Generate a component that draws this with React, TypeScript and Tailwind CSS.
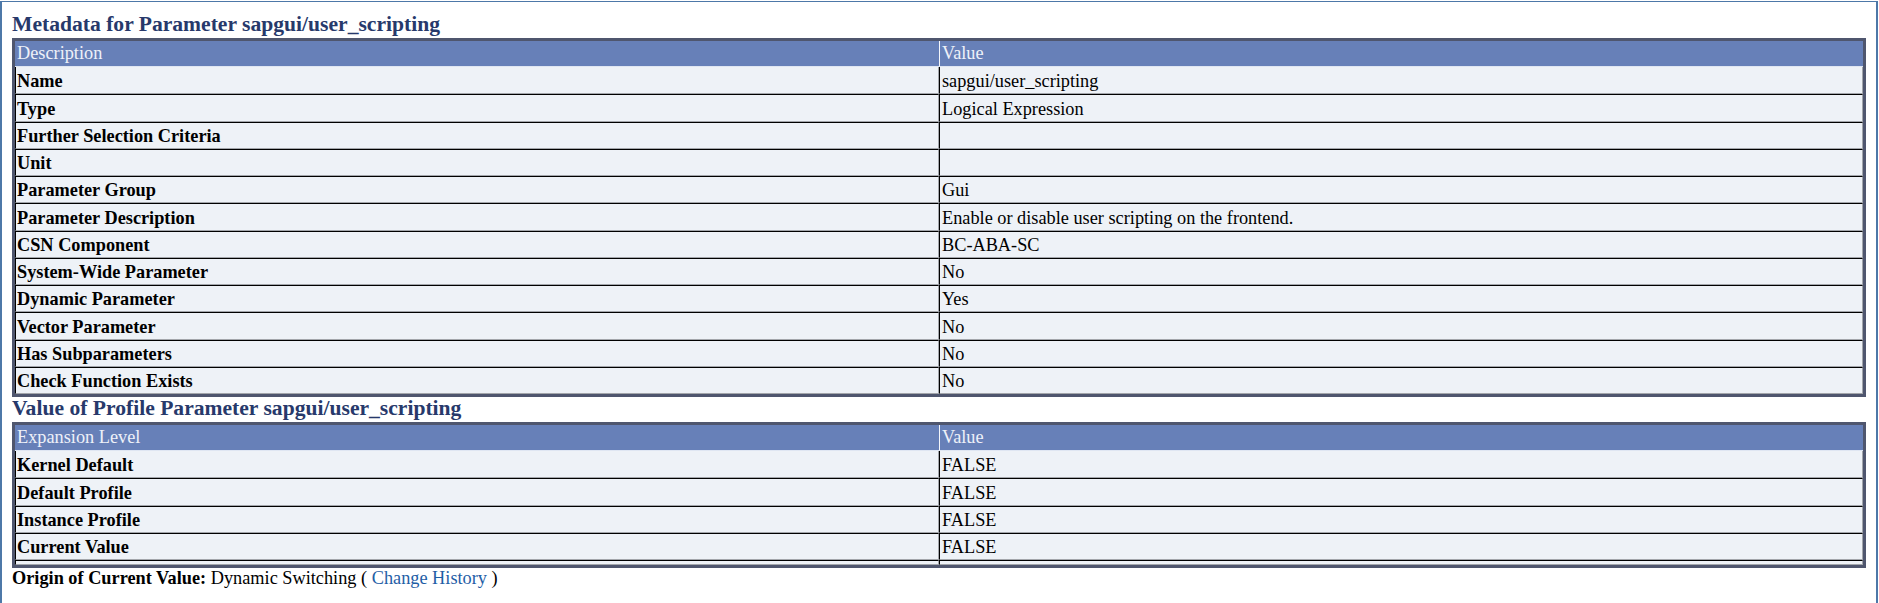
import React from "react";

const meta: [string, string][] = [
  ["Name", "sapgui/user_scripting"],
  ["Type", "Logical Expression"],
  ["Further Selection Criteria", ""],
  ["Unit", ""],
  ["Parameter Group", "Gui"],
  ["Parameter Description", "Enable or disable user scripting on the frontend."],
  ["CSN Component", "BC-ABA-SC"],
  ["System-Wide Parameter", "No"],
  ["Dynamic Parameter", "Yes"],
  ["Vector Parameter", "No"],
  ["Has Subparameters", "No"],
  ["Check Function Exists", "No"],
];

const profile: [string, string][] = [
  ["Kernel Default", "FALSE"],
  ["Default Profile", "FALSE"],
  ["Instance Profile", "FALSE"],
  ["Current Value", "FALSE"],
];

function Table({
  head,
  rows,
  trailer,
}: {
  head: [string, string];
  rows: [string, string][];
  trailer?: boolean;
}) {
  return (
    <div className="border-[3px] border-[#4f566e] bg-[#eef2f7]">
      <div className="flex h-[26px] bg-[#6780b8] text-[#eef1f8] border-b border-[#dfe6f2]">
        <div className="w-1/2 pl-[2px] pt-[1px] flex items-center">{head[0]}</div>
        <div className="w-1/2 border-l border-[#f4f6fb] pl-[2px] pt-[1px] flex items-center">
          {head[1]}
        </div>
      </div>
      {rows.map(([k, v], i) => (
        <div key={k} className="flex h-[27.25px]">
          <div
            className={
              i === 0
                ? "w-1/2 border-l border-b border-r border-l-black border-b-[#a3a6ab] border-r-[#a3a6ab] pl-[1px] pt-[3px] flex items-center font-bold"
                : "w-1/2 border-l border-t border-b border-r border-l-black border-t-black border-b-[#a3a6ab] border-r-[#a3a6ab] pl-[1px] pt-[3px] flex items-center font-bold"
            }
          >
            {k}
          </div>
          <div
            className={
              i === 0
                ? "w-1/2 border-l border-b border-r border-l-black border-b-[#a3a6ab] border-r-[#a3a6ab] pl-[2px] pt-[3px] flex items-center"
                : "w-1/2 border-l border-t border-b border-r border-l-black border-t-black border-b-[#a3a6ab] border-r-[#a3a6ab] pl-[2px] pt-[3px] flex items-center"
            }
          >
            {v}
          </div>
        </div>
      ))}
      {trailer && (
        <div className="flex h-[5px]">
          <div className="w-1/2 border-l border-t border-b border-r border-l-black border-t-black border-b-[#a3a6ab] border-r-[#a3a6ab]" />
          <div className="w-1/2 border-l border-t border-b border-r border-l-black border-t-black border-b-[#a3a6ab] border-r-[#a3a6ab]" />
        </div>
      )}
    </div>
  );
}

export default function App() {
  return (
    <div className="w-[1879px] h-[603px] bg-white overflow-hidden font-['Liberation_Serif','Times_New_Roman',serif] text-[18.3px] text-black">
      <div className="mt-px mr-px h-[602px] border-l-2 border-t border-r-2 border-[#4d78a8] pl-[10px] pr-[10px] pt-[11px]">
        <h1 className="h-[25px] leading-[23px] text-[21.6px] font-bold text-[#27396b] whitespace-nowrap">
          Metadata for Parameter sapgui/user_scripting
        </h1>
        <Table head={["Description", "Value"]} rows={meta} />
        <h2 className="h-[25px] leading-[23px] text-[21.6px] font-bold text-[#27396b] whitespace-nowrap">
          Value of Profile Parameter sapgui/user_scripting
        </h2>
        <Table head={["Expansion Level", "Value"]} rows={profile} trailer />
        <div className="leading-[21px] whitespace-nowrap">
          <span className="font-bold">Origin of Current Value:</span> Dynamic Switching ({" "}
          <a className="text-[#1f5ea6]">Change History</a> )
        </div>
      </div>
    </div>
  );
}
